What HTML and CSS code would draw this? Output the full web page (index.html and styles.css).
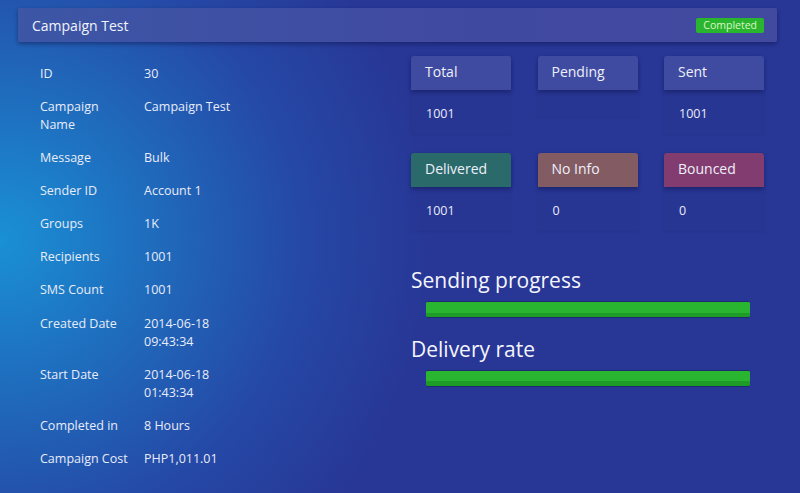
FILE: index.html
```html
<!DOCTYPE html>
<html>
<head>
<meta charset="utf-8">
<link rel="stylesheet" href="styles.css">
</head>
<body>
<div class="page">
  <div class="topbar">
    <span class="title">Campaign Test</span>
    <span class="badge">Completed</span>
  </div>
  <div class="content">
    <div class="details">
      <div class="row"><div class="label">ID</div><div class="value">30</div></div>
      <div class="row"><div class="label">Campaign<br>Name</div><div class="value">Campaign Test</div></div>
      <div class="row"><div class="label">Message</div><div class="value">Bulk</div></div>
      <div class="row"><div class="label">Sender ID</div><div class="value">Account 1</div></div>
      <div class="row"><div class="label">Groups</div><div class="value">1K</div></div>
      <div class="row"><div class="label">Recipients</div><div class="value">1001</div></div>
      <div class="row wide"><div class="label">SMS Count</div><div class="value">1001</div></div>
      <div class="row"><div class="label">Created Date</div><div class="value">2014-06-18<br>09:43:34</div></div>
      <div class="row"><div class="label">Start Date</div><div class="value">2014-06-18<br>01:43:34</div></div>
      <div class="row"><div class="label">Completed in</div><div class="value">8 Hours</div></div>
      <div class="row"><div class="label">Campaign Cost</div><div class="value">PHP1,011.01</div></div>
    </div>
    <div class="stats">
      <div class="cards">
        <div class="card"><div class="card-head">Total</div><div class="card-body">1001</div></div>
        <div class="card"><div class="card-head">Pending</div><div class="card-body"></div></div>
        <div class="card"><div class="card-head">Sent</div><div class="card-body">1001</div></div>
      </div>
      <div class="cards second">
        <div class="card"><div class="card-head delivered">Delivered</div><div class="card-body">1001</div></div>
        <div class="card"><div class="card-head noinfo">No Info</div><div class="card-body">0</div></div>
        <div class="card"><div class="card-head bounced">Bounced</div><div class="card-body">0</div></div>
      </div>
      <h2 class="section-title">Sending progress</h2>
      <div class="bar"><div class="fill" style="width:100%"></div></div>
      <h2 class="section-title">Delivery rate</h2>
      <div class="bar"><div class="fill" style="width:100%"></div></div>
    </div>
  </div>
</div>
</body>
</html>
```

FILE: styles.css
```css
html, body {
  margin: 0;
  padding: 0;
}
body {
  width: 800px;
  height: 493px;
  overflow: hidden;
  font-family: "Open Sans", "Noto Sans", sans-serif;
  color: #eef0fb;
  background: #283796;
  background-image: radial-gradient(ellipse 430px 420px at 0px 240px, #1a90d4 0%, #1f6cbd 35%, #2548a6 70%, rgba(40,55,150,0) 100%);
}
.page {
  padding: 8px 23px 0 18px;
}
.topbar {
  height: 34px;
  display: flex;
  align-items: center;
  justify-content: space-between;
  padding: 0 13px 0 14px;
  background: linear-gradient(90deg, #3d56a6 0%, #4049a0 60%, #414a9f 100%);
  border-radius: 2px;
  box-shadow: 0 2px 4px rgba(10, 15, 60, 0.45);
}
.title {
  font-size: 14px;
  color: #f2f4fc;
}
.badge {
  font-size: 10.5px;
  line-height: 15px;
  height: 15px;
  padding: 0 7px;
  background: #2ab52f;
  color: #dcf7c6;
  border-radius: 2px;
}
.content {
  display: flex;
  padding-top: 15px;
}
.details {
  width: 371px;
  padding: 8px 0 0 22px;
  box-sizing: border-box;
}
.row {
  display: flex;
  font-size: 12.5px;
  line-height: 18px;
  margin-bottom: 15px;
}
.row.wide {
  margin-bottom: 16px;
}
.label {
  width: 104px;
  flex-shrink: 0;
  color: #e9ecf8;
}
.value {
  color: #e9ecf8;
}
.stats {
  width: 353px;
  margin-left: 22px;
  margin-top: -1px;
}
.cards {
  display: flex;
  justify-content: space-between;
  align-items: flex-start;
}
.cards.second {
  margin-top: 19px;
}
.card {
  width: 100px;
}
.card-head {
  height: 34px;
  line-height: 32px;
  padding-left: 14px;
  font-size: 14px;
  color: #eef0fb;
  background: #3f4ba0;
  border-radius: 3px 3px 0 0;
  box-shadow: 0 2px 4px rgba(10, 15, 60, 0.45);
  position: relative;
}
.card-head.delivered { background: #2a6a6a; }
.card-head.noinfo { background: #835c63; }
.card-head.bounced { background: #833c6f; }
.card-body {
  padding: 15px 15px 11px;
  line-height: 18px;
  font-size: 12.5px;
  color: #e9ecf8;
  background: rgba(30, 40, 130, 0.12);
  box-shadow: 0 1px 2px rgba(20, 25, 90, 0.15);
}
.section-title {
  margin: 37px 0 0 0;
  font-weight: normal;
  font-size: 21px;
  line-height: 24px;
  color: #f4f5fc;
}
.section-title + .bar {
  margin-top: 9px;
}
.bar + .section-title {
  margin-top: 19px;
}
.bar {
  margin: 0 14px 0 15px;
  height: 17px;
  box-sizing: border-box;
  border-top: 1px solid #1d2a70;
  border-bottom: 1px solid #1d2a70;
  border-radius: 2px;
  background: #243080;
  overflow: hidden;
}
.fill {
  height: 100%;
  background: linear-gradient(180deg, #29b52f 0%, #29b52f 70%, #1f9b27 70%, #1f9b27 100%);
}
```
